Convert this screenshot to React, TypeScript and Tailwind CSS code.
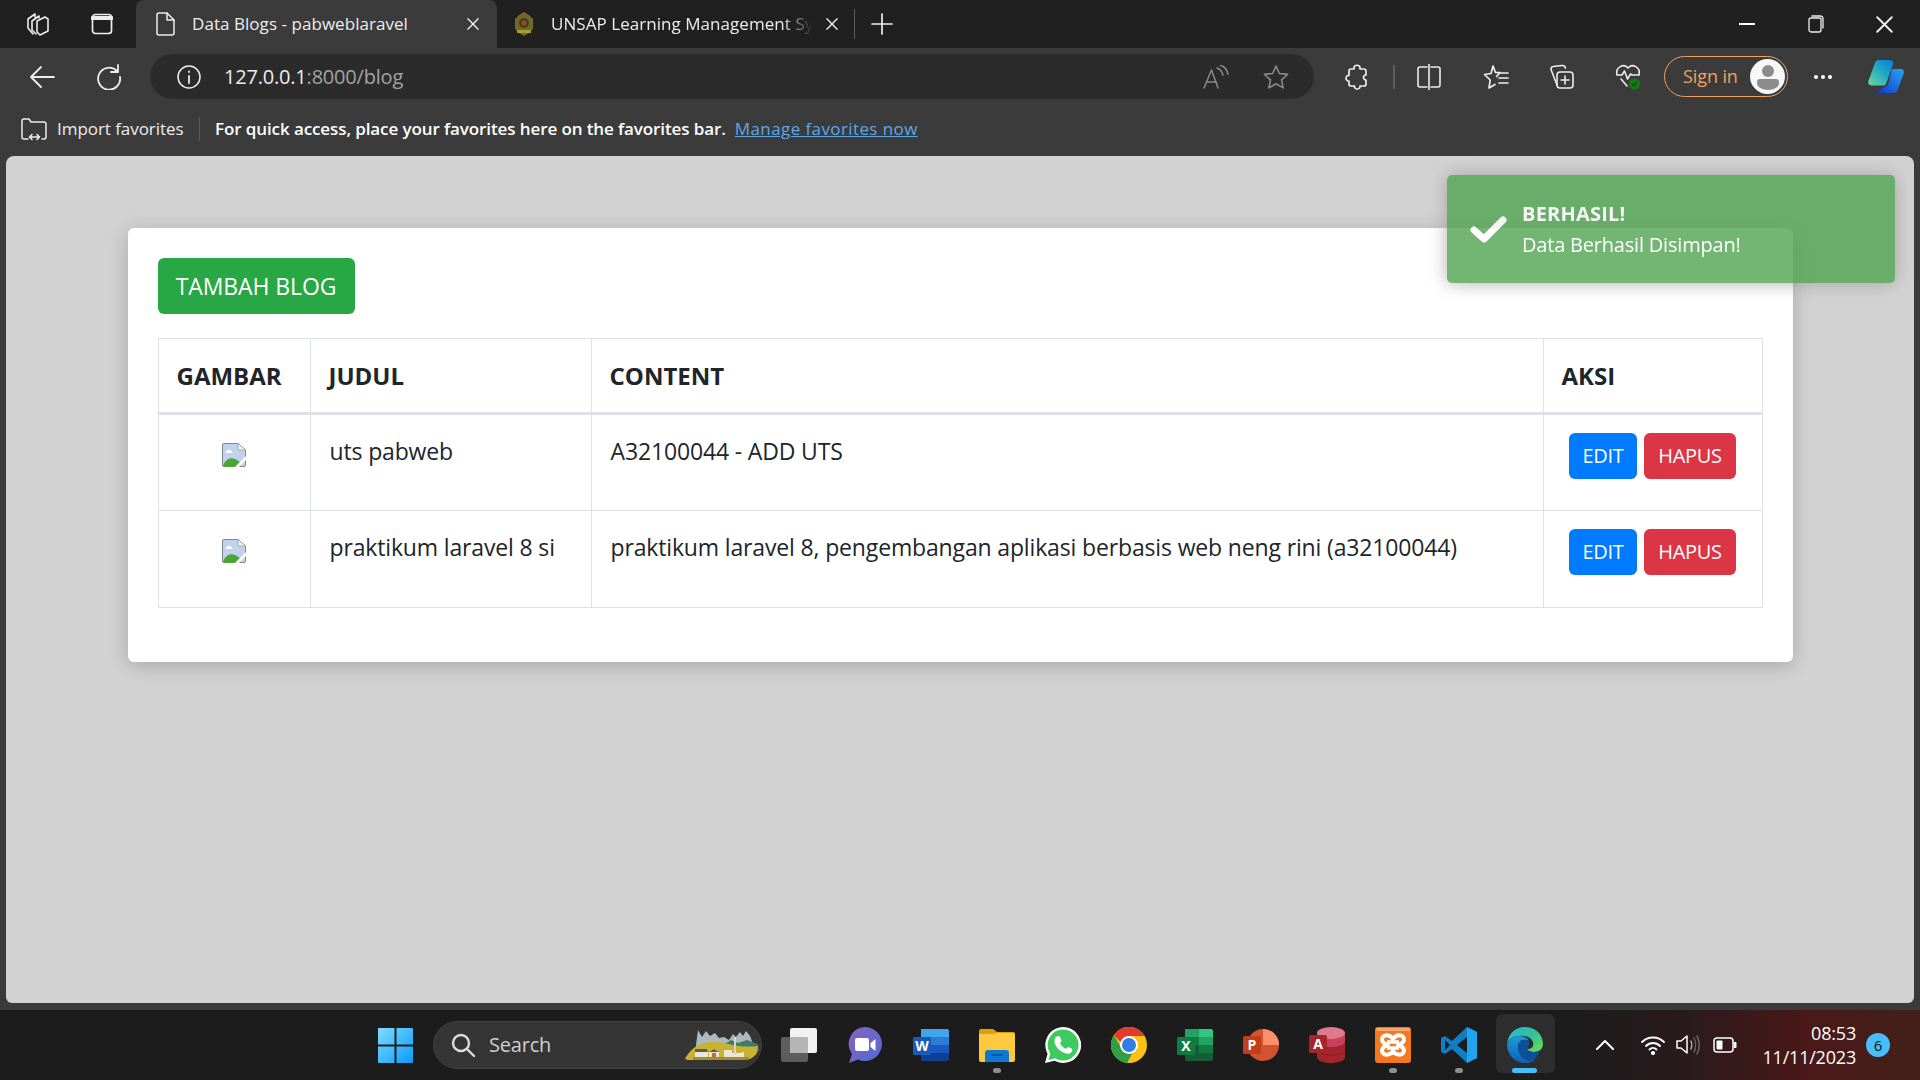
import { ReactNode } from "react";

const stroke = { fill: "none", stroke: "currentColor", strokeLinecap: "round", strokeLinejoin: "round" } as const;

const Slot = ({ w, children, className = "" }: { w: string; children?: ReactNode; className?: string }) => (
  <div className={`${w} h-full shrink-0 flex items-center justify-center ${className}`}>{children}</div>
);

const Workspaces = () => (
  <svg width="26" height="24" viewBox="0 0 26 24" {...stroke} strokeWidth="1.6">
    <path d="M3 7l7-5v3M3 7v9l5 6M7 9l7-5v2M7 9v9l4 4" />
    <path d="M12 9l8-4 3 2v12l-8 4-3-3z" />
  </svg>
);
const TabActions = () => (
  <svg width="22" height="22" viewBox="0 0 22 22" {...stroke} strokeWidth="1.7">
    <rect x="1.5" y="1.5" width="19" height="19" rx="3" />
    <path d="M1.5 5h19" strokeWidth="4" />
  </svg>
);
const Doc = () => (
  <svg width="20" height="24" viewBox="0 0 20 24" {...stroke} strokeWidth="1.5">
    <path d="M3 1h8l7 7v13a2 2 0 0 1-2 2H3a2 2 0 0 1-2-2V3a2 2 0 0 1 2-2z" />
    <path d="M11 1v7h7" />
  </svg>
);
const Close = ({ s = 12 }: { s?: number }) => (
  <svg width={s} height={s} viewBox="0 0 14 14" {...stroke} strokeWidth="1.6">
    <path d="M1 1l12 12M13 1L1 13" />
  </svg>
);
const UnsapLogo = () => (
  <svg width="20" height="24" viewBox="0 0 20 24">
    <path d="M10 0l5 3 4 4v10l-4 4-5 3-5-3-4-4V7l4-4z" fill="#6f6a2a" />
    <circle cx="10" cy="11" r="5" fill="#4a3d1a" />
    <circle cx="10" cy="11" r="2.5" fill="#a5452e" />
    <path d="M3 18h14v3H3z" fill="#a89a3a" />
  </svg>
);
const Back = () => (
  <svg width="26" height="24" viewBox="0 0 26 24" {...stroke} strokeWidth="1.8">
    <path d="M25 12H2M12 2L2 12l10 10" />
  </svg>
);
const Reload = () => (
  <svg width="26" height="26" viewBox="0 0 26 26" {...stroke} strokeWidth="1.8">
    <path d="M21 7a11 11 0 1 0 3 6M22 1v7h-7" />
  </svg>
);
const Info = () => (
  <svg width="24" height="24" viewBox="0 0 24 24" {...stroke} strokeWidth="1.5">
    <circle cx="12" cy="12" r="11" />
    <path d="M12 11v7M12 6.5v.5" strokeWidth="1.8" />
  </svg>
);
const ReadAloud = () => (
  <svg width="26" height="24" viewBox="0 0 26 24" {...stroke} strokeWidth="1.5" className="text-[#8a8a8a]">
    <path d="M1 23L8.500 5 15 23M3.500 17h10" />
    <path d="M14 3c3 1 5 3 6 7M17 0c3 1 7 4 8 9" />
  </svg>
);
const Star = () => (
  <svg width="26" height="26" viewBox="0 0 26 26" {...stroke} strokeWidth="1.6" className="text-[#8a8a8a]">
    <path d="M13 2l3.400 7.500 8.100.9-6 5.500 1.700 8L13 19.800 5.800 23.900l1.700-8-6-5.500 8.100-.9z" />
  </svg>
);
const Puzzle = () => (
  <svg width="24" height="26" viewBox="0 0 24 26" {...stroke} strokeWidth="1.7">
    <path d="M9 5c-1-5 7-5 6 0h4c1 0 2 1 2 2v4c-1.500 0-2.500 1-2.500 2.500S20 16 21 16v4c0 1-1 2-2 2h-4c.5 4-6 4-5.500 0H6c-1 0-2-1-2-2v-3c-4 .5-4-6 0-5.500V7c0-1 1-2 2-2z" />
  </svg>
);
const Split = () => (
  <svg width="24" height="26" viewBox="0 0 24 26" {...stroke} strokeWidth="1.6">
    <path d="M10 3H3a2 2 0 0 0-2 2v16a2 2 0 0 0 2 2h7M14 3h7a2 2 0 0 1 2 2v16a2 2 0 0 1-2 2h-7M12 0v26" />
  </svg>
);
const FavList = () => (
  <svg width="26" height="26" viewBox="0 0 26 26" {...stroke} strokeWidth="1.7">
    <path d="M10 2l2.500 6.500H17l-3.500 4M6 24l1.200-8L1.500 10.500 8 9.500 10 2M6 24l6-3.500" />
    <path d="M17 9h8M16 14h9M16 19h9" />
  </svg>
);
const Collections = () => (
  <svg width="26" height="26" viewBox="0 0 26 26" {...stroke} strokeWidth="1.6">
    <path d="M8 21L2 5.500C1.800 4 3 2.500 4 2.500l9-1c2-.2 3 .7 3.500 2.500" />
    <rect x="8" y="8" width="16" height="16" rx="3" />
    <path d="M16 12v8M12 16h8" />
  </svg>
);
const Health = () => (
  <svg width="26" height="26" viewBox="0 0 26 26" className="overflow-visible">
    <g {...stroke} strokeWidth="1.6">
      <path d="M1 11C-1 3 8-1 12 4c4-5 13-1 11 7M1 11h5l2.500-4 3 8 3-5 1.500 1h6M5 15l6 7" />
    </g>
    <circle cx="18.500" cy="20" r="5.500" fill="#107c10" />
    <path d="M16 20l2 2 3-4" fill="none" stroke="#0a4d0a" strokeWidth="1.300" />
  </svg>
);
const Copilot = () => (
  <svg width="36" height="33" viewBox="0 0 36 33">
    <defs>
      <linearGradient id="cpa" x1="0" y1="1" x2="1" y2="0">
        <stop offset="0" stopColor="#6fd89a" />
        <stop offset="0.6" stopColor="#1ba3c9" />
        <stop offset="1" stopColor="#0a7cd6" />
      </linearGradient>
      <linearGradient id="cpb" x1="0" y1="1" x2="1" y2="0">
        <stop offset="0" stopColor="#1238c9" />
        <stop offset="1" stopColor="#2aa6f2" />
      </linearGradient>
    </defs>
    <path d="M11 0h11c2 0 3 1 3.500 3L18 24c-.6 1-1.500 1.500-3 1.500H4c-3 0-4.500-2-3.500-5L7 3c.6-2 2-3 4-3z" fill="url(#cpa)" />
    <path d="M24 9h9c2 0 3.500 2 2.500 5L30 29c-1 3-3 4-5 4H11c-2 0-2-1-1-2l7-4c2-1 3-2 3.500-4z" fill="url(#cpb)" />
  </svg>
);
const ImportFav = () => (
  <svg width="26" height="23" viewBox="0 0 26 23" {...stroke} strokeWidth="1.5">
    <path d="M7 21H3a2 2 0 0 1-2-2V3a2 2 0 0 1 2-2h5l2 3h13a2 2 0 0 1 2 2v13a2 2 0 0 1-2 2h-2" />
    <path d="M9 19h9M11 16.500L8.500 19l2.500 2.500M16 16.500l2.500 2.500-2.500 2.500" />
  </svg>
);
const Broken = () => (
  <svg width="24" height="24" viewBox="0 0 24 24">
    <path d="M2 .5h14l7.500 6.500v15a1.500 1.500 0 0 1-1.500 1.500H2A1.500 1.500 0 0 1 .5 22V2A1.500 1.500 0 0 1 2 .5z" fill="#c3d2ec" stroke="#7f8894" strokeWidth="1" />
    <path d="M16 .5V7h7.500z" fill="#f2f2f2" stroke="#a0a0a0" strokeWidth="0.800" />
    <path d="M5 8c1-2 3-2 4 0 2 0 2 2 0 2H5c-2 0-2-2 0-2z" fill="#fff" />
    <path d="M1 23c2-7 8-9 12-7l5 3-4 5H2z" fill="#4fa437" />
    <path d="M13 24l11-11v4l-7 7z" fill="#fff" />
  </svg>
);
const Check = () => (
  <svg width="37" height="29" viewBox="0 0 37 29" fill="none" stroke="#fff" strokeWidth="7" strokeLinecap="round" strokeLinejoin="round">
    <path d="M4 15l10 9L33 5" />
  </svg>
);

// taskbar
const WinLogo = () => (
  <svg width="35" height="35" viewBox="0 0 35 35">
    <defs>
      <linearGradient id="wn" x1="0" y1="0" x2="1" y2="1">
        <stop offset="0" stopColor="#7fdcff" />
        <stop offset="1" stopColor="#0a9bfa" />
      </linearGradient>
    </defs>
    <path d="M1 0h15.500v16.500H0V1a1 1 0 0 1 1-1zM18.500 0H34a1 1 0 0 1 1 1v15.500H18.500zM0 18.500h16.500V35H1a1 1 0 0 1-1-1zM18.500 18.500H35V34a1 1 0 0 1-1 1H18.500z" fill="url(#wn)" />
  </svg>
);
const SearchIcon = () => (
  <svg width="24" height="24" viewBox="0 0 24 24" {...stroke} strokeWidth="2.400" className="text-[#dcdcdc]">
    <circle cx="10" cy="10" r="8" />
    <path d="M16 16l7 7" />
  </svg>
);
const Village = () => (
  <svg width="74" height="32" viewBox="0 0 74 32">
    <path d="M11 16L13 1l4 7 4-6 4 5 5-3 4 5 5-1 5 3 4-6 3 3 4-5 3 4 3-5 4 5 4 10v6H11z" fill="#aeb9bd" />
    <path d="M38 16l8-5 7 3 9-3 11 4 1 7H40z" fill="#3e7a68" />
    <path d="M0 30c3-6 8-12 16-15 8-3 20-2 28 0 10 3 20 3 29 2l-1 7c-3 4-7 7-12 7H8c-4 0-7 0-8-1z" fill="#c8b22f" />
    <path d="M8 28h56v3H8z" fill="#7a6c1c" opacity="0.500" />
    <path d="M10 20h12l1 3v5H10v-5zM24 23l5-3 5 3v5H24zM39 21h8v7h-8zM47 24h8l4-1v5H47z" fill="#e8e6df" />
    <path d="M10 20h12l1 3H10zM24 23l5-3 5 3z" fill="#5c5a60" />
    <path d="M49 8h2v17h-2z" fill="#d8d5cc" />
    <path d="M27 24h4v4h-4z" fill="#c7683a" />
  </svg>
);
const TaskView = () => (
  <svg width="36" height="34" viewBox="0 0 36 34">
    <rect x="0" y="9" width="27" height="25" rx="2" fill="#5d5d5d" />
    <rect x="9" y="0" width="27" height="25" rx="2" fill="#f2f2f2" />
    <rect x="9" y="9" width="18" height="16" rx="1" fill="#b5b5b5" />
  </svg>
);
const Teams = () => (
  <svg width="34" height="36" viewBox="0 0 34 36">
    <defs>
      <linearGradient id="tm" x1="0" y1="0" x2="1" y2="1">
        <stop offset="0" stopColor="#8a64bd" />
        <stop offset="1" stopColor="#4b6ad6" />
      </linearGradient>
    </defs>
    <path d="M17 0a17 17 0 1 1-7 32.500L1 36l3-9A17 17 0 0 1 17 0z" fill="url(#tm)" />
    <rect x="7" y="11" width="14" height="13" rx="2" fill="#fff" />
    <path d="M22.500 16l5-4v12l-5-4z" fill="#fff" />
  </svg>
);
const Word = () => (
  <svg width="36" height="32" viewBox="0 0 36 32">
    <path d="M8 0h26a2 2 0 0 1 2 2v6H8z" fill="#41a5ee" />
    <path d="M8 8h28v8H8z" fill="#2b7cd3" />
    <path d="M8 16h28v8H8z" fill="#185abd" />
    <path d="M8 24h28v6a2 2 0 0 1-2 2H10a2 2 0 0 1-2-2z" fill="#103f91" />
    <rect x="0" y="8" width="18" height="18" rx="1.500" fill="#185abd" />
    <text x="9" y="22" textAnchor="middle" fontSize="14" fontWeight="700" fill="#fff" fontFamily="Open Sans">W</text>
  </svg>
);
const Folder = () => (
  <svg width="36" height="33" viewBox="0 0 36 33">
    <path d="M2 0h12l4 3h16a2 2 0 0 1 2 2v6H0V2a2 2 0 0 1 2-2z" fill="#e0a106" />
    <path d="M0 5h14l4-1h16a2 2 0 0 1 2 2v25a2 2 0 0 1-2 2H2a2 2 0 0 1-2-2z" fill="#fdc93e" />
    <path d="M6 33v-9a3 3 0 0 1 3-3h18a3 3 0 0 1 3 3v9z" fill="#0f78d4" />
    <path d="M12 26h12" stroke="#0a4f90" strokeWidth="1.500" />
  </svg>
);
const WhatsApp = () => (
  <svg width="36" height="36" viewBox="0 0 36 36">
    <path d="M18 0a18 18 0 1 1-8.500 33.800L0 36l2.600-9.300A18 18 0 0 1 18 0z" fill="#fff" />
    <path d="M18 2.500a15.500 15.500 0 1 1-7.900 28.800L3.500 33l1.800-6.400A15.500 15.500 0 0 1 18 2.500z" fill="#3dcb5f" />
    <path d="M13 9c1 0 1.500 0 2 1l1.500 3.500c0 1-1 2-1.500 2.500 1 2.500 3 4.500 6 6 .8-.8 1.500-2 2.500-2l3.500 1.700c.6 1 0 3-1 4-2 1.500-4 1.500-7 0-4-1.500-7-4.500-9-8.500-1-3-.5-6 1-7.500z" fill="#fff" />
  </svg>
);
const Chrome = () => (
  <svg width="36" height="36" viewBox="0 0 36 36">
    <circle cx="18" cy="18" r="18" fill="#fbc116" />
    <path d="M18 0a18 18 0 0 1 15.600 9H18a9 9 0 0 0-8.500 6L2.900 8.300A18 18 0 0 1 18 0z" fill="#e33b2e" />
    <path d="M2.900 8.300L11 22a9 9 0 0 0 10.500 4L16 36A18 18 0 0 1 2.900 8.300z" fill="#2f9e44" />
    <circle cx="18" cy="18" r="9" fill="#fff" />
    <circle cx="18" cy="18" r="7" fill="#2f7de8" />
  </svg>
);
const Excel = () => (
  <svg width="36" height="32" viewBox="0 0 36 32">
    <path d="M8 0h26a2 2 0 0 1 2 2v6H8z" fill="#33c481" />
    <path d="M8 0h14v8H8z" fill="#21a366" />
    <path d="M8 8h14v8H8zM22 16h14v8H22z" fill="#107c41" />
    <path d="M22 8h14v8H22z" fill="#21a366" />
    <path d="M8 16h14v8H8z" fill="#185c37" />
    <path d="M8 24h28v6a2 2 0 0 1-2 2H10a2 2 0 0 1-2-2z" fill="#185c37" />
    <rect x="0" y="8" width="18" height="18" rx="1.500" fill="#107c41" />
    <text x="9" y="22" textAnchor="middle" fontSize="14" fontWeight="700" fill="#fff" fontFamily="Open Sans">X</text>
  </svg>
);
const PowerPoint = () => (
  <svg width="36" height="32" viewBox="0 0 36 32">
    <circle cx="20" cy="16" r="16" fill="#d35230" />
    <path d="M20 0a16 16 0 0 1 16 16H20z" fill="#ff8f6b" />
    <rect x="0" y="7" width="18" height="18" rx="1.500" fill="#c43e1c" />
    <text x="9" y="21" textAnchor="middle" fontSize="14" fontWeight="700" fill="#fff" fontFamily="Open Sans">P</text>
  </svg>
);
const Access = () => (
  <svg width="36" height="36" viewBox="0 0 36 36">
    <path d="M8 6v24c0 3.500 6 6 14 6s14-2.500 14-6V6z" fill="#a4262c" />
    <path d="M8 6v8c0 3.500 6 6 14 6s14-2.500 14-6V6z" fill="#c8415a" />
    <ellipse cx="22" cy="6" rx="14" ry="6" fill="#e0788e" />
    <path d="M8 22c0 3.500 6 6 14 6s14-2.500 14-6" fill="none" stroke="#8a1a25" strokeWidth="1" />
    <rect x="0" y="8" width="18" height="18" rx="1.500" fill="#a4262c" />
    <text x="9" y="22" textAnchor="middle" fontSize="14" fontWeight="700" fill="#fff" fontFamily="Open Sans">A</text>
  </svg>
);
const Xampp = () => (
  <svg width="36" height="36" viewBox="0 0 36 36">
    <rect width="36" height="36" rx="3" fill="#f2791f" />
    <rect x="1" y="1" width="34" height="3" rx="1.500" fill="#f9a869" />
    <path d="M18 12C15 7 7 7 7 12.500c0 3 3 4.500 6 5.500-3 1-6 2.500-6 5.500C7 29 15 29 18 24c3 5 11 5 11-.5 0-3-3-4.500-6-5.500 3-1 6-2.500 6-5.500C29 7 21 7 18 12z" fill="none" stroke="#fff" strokeWidth="4" strokeLinejoin="round" />
    <path d="M12 15h12M12 21h12" stroke="#fff" strokeWidth="3.500" />
  </svg>
);
const VsCode = () => (
  <svg width="36" height="36" viewBox="0 0 36 36">
    <path d="M26 0l10 5v26l-10 5L11 22l-7 5-4-2V11l4-2 7 5z" fill="#0f7ec4" />
    <path d="M26 0l10 5v26l-10 5z" fill="#22a3ee" />
    <path d="M4 13v10l5-5zM26 10l-10 8 10 8z" fill="#1b1b1b" />
  </svg>
);
const Edge = () => (
  <svg width="36" height="36" viewBox="0 0 36 36">
    <defs>
      <linearGradient id="ed" x1="0" y1="0" x2="1" y2="1">
        <stop offset="0" stopColor="#2fb6d8" />
        <stop offset="0.500" stopColor="#2fc29a" />
        <stop offset="1" stopColor="#6fdc4f" />
      </linearGradient>
      <linearGradient id="ee" x1="0" y1="0" x2="0" y2="1">
        <stop offset="0" stopColor="#1d9bd8" />
        <stop offset="1" stopColor="#0b62b8" />
      </linearGradient>
    </defs>
    <path d="M18 0c10 0 18 7 18 17 0 5-4 8-9 8-4 0-6-1-7-3 5 0 7-3 6-7-2-5-8-7-14-6C4 10 1 13 0 17 1 7 8 0 18 0z" fill="url(#ed)" />
    <path d="M0 17c2-5 7-8 12-8 5 0 8 2 10 5-6-3-11 0-11 6 0 8 7 15 16 14-3 1.500-6 2-9 2C8 36 0 28 0 17z" fill="url(#ee)" />
    <path d="M11 20c0-6 5-9 11-6 1 3-1 7-2 8 1 2 3 3 7 3 2 0 4-.5 6-2-2 6-6 10-6 11-9 1-16-6-16-14z" fill="#0d4f9c" />
  </svg>
);
const Wifi = () => (
  <svg width="24" height="20" viewBox="0 0 24 20" {...stroke} strokeWidth="1.800" className="text-white">
    <path d="M1 7c6-6 16-6 22 0M5 11c4-4 10-4 14 0M8.500 14.500c2-2 5-2 7 0" />
    <circle cx="12" cy="18" r="1.200" fill="currentColor" />
  </svg>
);
const Speaker = () => (
  <svg width="24" height="20" viewBox="0 0 24 20" fill="none" strokeLinecap="round" strokeLinejoin="round" strokeWidth="1.500">
    <path d="M1 6v7h4l6 5V1L5 6z" stroke="#fff" />
    <path d="M15 6c1 2 1 6 0 8" stroke="#aaa" />
    <path d="M18 3c2 4 2 10 0 14M21 1c3 5 3 13 0 18" stroke="#666" />
  </svg>
);
const Battery = () => (
  <svg width="24" height="16" viewBox="0 0 24 16">
    <rect x="1" y="1" width="19" height="14" rx="3" fill="none" stroke="#fff" strokeWidth="1.500" />
    <rect x="3.500" y="3.500" width="6" height="9" rx="1" fill="#fff" />
    <path d="M21 5h1.500a1 1 0 0 1 1 1v4a1 1 0 0 1-1 1H21z" fill="#fff" />
  </svg>
);

const TaskIcon = ({ children, dot, active }: { children: ReactNode; dot?: boolean; active?: boolean }) => (
  <div className="relative w-[66px] h-full flex items-center justify-center shrink-0">
    {active && <div className="absolute left-[4px] top-[4px] w-[59px] h-[59px] rounded-md bg-[#2d2d2d]" />}
    <div className="relative flex">{children}</div>
    {dot && <div className="absolute left-[29px] bottom-[7px] w-[8px] h-[5px] rounded-full bg-[#8f8f8f]" />}
    {active && <div className="absolute left-[20px] bottom-[7px] w-[25px] h-[5px] rounded-full bg-[#47bfff]" />}
  </div>
);

const rows = [
  { title: "uts pabweb", content: "A32100044 - ADD UTS" },
  {
    title: "praktikum laravel 8 si",
    content: "praktikum laravel 8, pengembangan aplikasi berbasis web neng rini (a32100044)",
  },
];

export default function App() {
  return (
    <div className="w-[1920px] h-[1080px] flex flex-col overflow-hidden bg-[#3b3b3b] font-['Open_Sans',sans-serif] text-white relative">
      {/* tab strip */}
      <div className="h-12 bg-[#202020] flex items-center shrink-0 pl-[6px] text-[#ededed]">
        <Slot w="w-16"><Workspaces /></Slot>
        <Slot w="w-16"><TabActions /></Slot>
        <div className="ml-[2px] w-[361px] h-full bg-[#3b3b3b] rounded-t-lg flex items-center pl-5">
          <Doc />
          <span className="ml-[16px] text-[17px] tracking-[0.05px] whitespace-nowrap w-[275px]">Data Blogs - pabweblaravel</span>
          <Close />
        </div>
        <div className="w-[357px] h-full flex items-center pl-[17px]">
          <UnsapLogo />
          <span className="ml-[17px] w-[262px] text-[17px] tracking-[0.05px] whitespace-nowrap overflow-hidden [mask-image:linear-gradient(to_right,black_88%,transparent)]">
            UNSAP Learning Management Sy
          </span>
          <div className="ml-[13px] flex"><Close /></div>
        </div>
        <div className="w-px h-[30px] bg-[#5a5a5a]" />
        <svg width="22" height="22" viewBox="0 0 22 22" {...stroke} strokeWidth="1.700" className="ml-[16px]">
          <path d="M11 1v20M1 11h20" />
        </svg>
        <div className="ml-auto flex h-full pr-px">
          <Slot w="w-[69px]"><div className="w-[16px] h-[1.5px] bg-white" /></Slot>
          <Slot w="w-[69px]">
            <svg width="16" height="18" viewBox="0 0 16 18" {...stroke} strokeWidth="1.300">
              <rect x="1" y="3" width="12" height="14" rx="2" />
              <path d="M4 1h8a3 3 0 0 1 3 3v9" />
            </svg>
          </Slot>
          <Slot w="w-[69px]"><Close s={17} /></Slot>
        </div>
      </div>

      {/* toolbar */}
      <div className="h-[63px] flex items-center shrink-0 pl-2 pb-[6px] text-[#ededed]">
        <Slot w="w-[67px]"><Back /></Slot>
        <Slot w="w-[67px]"><Reload /></Slot>
        <div className="ml-2 w-[1164px] h-[45px] rounded-full bg-[#2b2b2b] flex items-center">
          <Slot w="w-[78px]"><Info /></Slot>
          <span className="ml-[-4px] text-[20px] tracking-[-0.2px]">
            127.0.0.1<span className="text-[#a3a3a3]">:8000/blog</span>
          </span>
          <div className="ml-auto mr-2 flex h-full">
            <Slot w="w-[60px]"><ReadAloud /></Slot>
            <Slot w="w-[60px]"><Star /></Slot>
          </div>
        </div>
        <Slot w="w-[66px]" className="ml-[10px]"><Puzzle /></Slot>
        <div className="w-[2px] h-[24px] bg-[#5f5f5f] ml-[3px]" />
        <Slot w="w-[66px]" className="ml-[1px]"><Split /></Slot>
        <Slot w="w-[66px]" className="ml-[1px]"><FavList /></Slot>
        <Slot w="w-[66px]"><Collections /></Slot>
        <Slot w="w-[66px]" className="ml-[1px]"><Health /></Slot>
        <div className="ml-[2px] w-[124px] h-[41px] rounded-full border-[1.5px] border-[#f0a35e] flex items-center pl-[18px]">
          <span className="text-[18px] tracking-[-0.1px] text-[#f0a35e] whitespace-nowrap">Sign in</span>
          <div className="ml-auto mr-[2px] w-[35px] h-[35px] rounded-full bg-[#f7f7f7] flex items-center justify-center">
            <svg width="22" height="26" viewBox="0 0 22 26" fill="#8c8c8c">
              <circle cx="11" cy="7" r="6" />
              <path d="M3 15h16a3 3 0 0 1 3 3v1c0 4-5 7-11 7S0 23 0 19v-1a3 3 0 0 1 3-3z" />
            </svg>
          </div>
        </div>
        <Slot w="w-[66px]" className="ml-[2px] gap-[3px]">
          <div className="w-1 h-1 rounded-full bg-white" />
          <div className="w-1 h-1 rounded-full bg-white" />
          <div className="w-1 h-1 rounded-full bg-white" />
        </Slot>
        <Slot w="w-[60px]"><Copilot /></Slot>
      </div>

      {/* favorites bar */}
      <div className="h-[45px] flex items-center shrink-0 pl-[21px] pb-[9px] text-[#ededed]">
        <ImportFav />
        <span className="ml-[10px] w-[142px] text-[17px] tracking-[-0.05px] whitespace-nowrap">Import favorites</span>
        <div className="w-px h-[24px] bg-[#5a5a5a]" />
        <span className="ml-[15px] text-[17px] font-semibold tracking-[-0.1px] whitespace-nowrap text-white">
          For quick access, place your favorites here on the favorites bar.
        </span>
        <span className="ml-[9px] text-[17px] tracking-[0.4px] whitespace-nowrap text-[#5ea7e6] underline">Manage favorites now</span>
      </div>

      {/* page */}
      <div className="flex-1 mx-[6px] rounded-t-lg rounded-b-md bg-[#d2d2d2] text-[#212529] pt-[72px]">
        <div className="w-[1665px] mx-auto bg-white rounded-md shadow-[0_4px_20px_rgba(0,0,0,0.2)] p-[30px] pb-[54px]">
          <button className="h-14 w-[197px] rounded-md bg-[#28a745] text-white text-[23px] tracking-[-0.1px]">TAMBAH BLOG</button>
          <table className="mt-6 w-[1604px] table-fixed border-collapse text-[23px] tracking-[-0.15px]">
            <colgroup>
              <col className="w-[152px]" />
              <col className="w-[281px]" />
              <col className="w-[952px]" />
              <col className="w-[219px]" />
            </colgroup>
            <thead>
              <tr className="h-[75px]">
                {["GAMBAR", "JUDUL", "CONTENT", "AKSI"].map((h) => (
                  <th key={h} className="border border-[#dee2e6] border-b-[3px] pl-[18px] text-left text-[24px] tracking-normal font-bold">{h}</th>
                ))}
              </tr>
            </thead>
            <tbody>
              {rows.map((r) => (
                <tr key={r.title} className="h-[97px]">
                  <td className="border border-[#dee2e6] align-top pt-7">
                    <div className="flex justify-center"><Broken /></div>
                  </td>
                  <td className="border border-[#dee2e6] align-top pl-[19px] pt-[18px] leading-9 whitespace-nowrap">{r.title}</td>
                  <td className="border border-[#dee2e6] align-top pl-[19px] pt-[18px] leading-9 whitespace-nowrap">{r.content}</td>
                  <td className="border border-[#dee2e6] align-top pt-[18px]">
                    <div className="flex justify-center gap-[7px]">
                      <button className="w-[68px] h-[46px] rounded-md bg-[#007bff] text-white text-[20px] tracking-[-0.3px]">EDIT</button>
                      <button className="w-[92px] h-[46px] rounded-md bg-[#dc3545] text-white text-[20px] tracking-[-0.3px]">HAPUS</button>
                    </div>
                  </td>
                </tr>
              ))}
            </tbody>
          </table>
        </div>
      </div>

      {/* taskbar */}
      <div className="mt-[7px] h-[70px] shrink-0 flex items-center bg-[linear-gradient(90deg,#1c1c1c_0%,#1c1c1c_82%,#2a1a1e_88%,#4a1818_94%,#432019_100%)]">
        <Slot w="w-[66px]" className="ml-[362px]"><WinLogo /></Slot>
        <div className="ml-[5px] w-[329px] h-[48px] rounded-full bg-[#353535] border border-[#404040] flex items-center pl-[17px] overflow-hidden">
          <SearchIcon />
          <span className="ml-[14px] text-[20px] tracking-[-0.2px] text-[#cfcfcf]">Search</span>
          <div className="ml-auto mr-[2px] flex"><Village /></div>
        </div>
        <div className="ml-[4px] flex h-full">
          <TaskIcon><TaskView /></TaskIcon>
          <TaskIcon><Teams /></TaskIcon>
          <TaskIcon><Word /></TaskIcon>
          <TaskIcon dot><Folder /></TaskIcon>
          <TaskIcon><WhatsApp /></TaskIcon>
          <TaskIcon><Chrome /></TaskIcon>
          <TaskIcon><Excel /></TaskIcon>
          <TaskIcon><PowerPoint /></TaskIcon>
          <TaskIcon><Access /></TaskIcon>
          <TaskIcon dot><Xampp /></TaskIcon>
          <TaskIcon dot><VsCode /></TaskIcon>
          <TaskIcon active><Edge /></TaskIcon>
        </div>
        <svg width="18" height="10" viewBox="0 0 18 10" {...stroke} strokeWidth="2" className="ml-[38px] text-white">
          <path d="M1 9l8-8 8 8" />
        </svg>
        <div className="ml-[27px] flex items-center gap-[11px]">
          <Wifi />
          <Speaker />
          <div className="ml-[2px] flex"><Battery /></div>
        </div>
        <div className="ml-auto flex flex-col items-end text-[18px] leading-[24px] tracking-[-0.2px] text-white">
          <span>08:53</span>
          <span>11/11/2023</span>
        </div>
        <div className="ml-[10px] mr-[30px] w-[24px] h-[24px] rounded-full bg-[#47bfff] text-[#111] text-[15px] flex items-center justify-center">6</div>
      </div>

      {/* toast */}
      <div className="absolute left-[1447px] top-[175px] w-[448px] h-[108px] rounded-[5px] bg-[#51a351] opacity-80 shadow-[0_0_18px_#999] flex items-center pl-[23px]">
        <Check />
        <div className="ml-[15px] text-white text-[20px]">
          <div className="font-bold leading-[31px] tracking-[0.2px]">BERHASIL!</div>
          <div className="leading-[31px] tracking-[-0.2px]">Data Berhasil Disimpan!</div>
        </div>
      </div>
    </div>
  );
}
